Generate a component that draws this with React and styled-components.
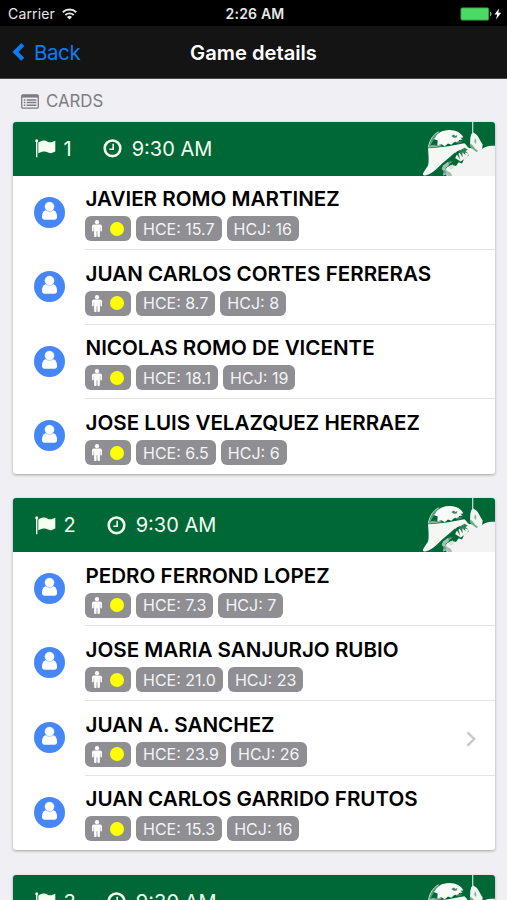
import React from 'react';
import styled, { createGlobalStyle } from 'styled-components';

const GlobalStyle = createGlobalStyle`
  * {
    box-sizing: border-box;
  }
  body {
    margin: 0;
    background: #efeff4;
    font-family: Inter, 'Liberation Sans', sans-serif;
  }
`;

const Screen = styled.div`
  width: 507px;
  height: 900px;
  overflow: hidden;
  background: #efeff4;
`;

const StatusBar = styled.div`
  display: grid;
  grid-template-columns: 1fr auto 1fr;
  align-items: center;
  height: 26px;
  padding: 1px 5px 0 8px;
  color: #e8e8e8;
  background: #000;
  font-size: 14px;
`;

const Carrier = styled.div`
  display: flex;
  align-items: center;
  gap: 7px;
  letter-spacing: 0.15px;
`;

const Clock = styled.div`
  font-size: 14px;
  font-weight: 600;
  letter-spacing: 0.2px;
`;

const Battery = styled.div`
  display: flex;
  justify-content: flex-end;
`;

const NavBar = styled.div`
  display: grid;
  grid-template-columns: 1fr auto 1fr;
  align-items: center;
  height: 53px;
  padding: 0 12px;
  background: #141414;
  border-bottom: 1px solid #4b4b4b;
`;

const BackButton = styled.button`
  display: flex;
  align-items: center;
  gap: 9px;
  padding: 0;
  border: none;
  background: none;
  color: #0a7cf6;
  font-family: inherit;
  font-size: 20.5px;
  letter-spacing: -0.4px;
`;

const PageTitle = styled.div`
  color: #fff;
  font-size: 20.2px;
  font-weight: 600;
`;

const SectionTitle = styled.div`
  display: flex;
  align-items: center;
  gap: 7px;
  height: 43px;
  padding: 1px 0 0 21px;
  color: #7d7d82;
  font-size: 16.8px;
`;

const Card = styled.div`
  margin: 0 12px 24.5px 13px;
  overflow: hidden;
  background: #fff;
  border-radius: 3px;
  box-shadow: 0 1px 3px rgba(0, 0, 0, 0.32);
`;

const CardHeader = styled.div`
  display: flex;
  align-items: center;
  height: 53.5px;
  padding-left: 22px;
  color: #f4fff2;
  background: #006837;
  font-size: 20px;
`;

const Hole = styled.div`
  display: flex;
  align-items: center;
  gap: 7.5px;
  margin-right: 31px;
`;

const TeeTime = styled.div`
  display: flex;
  align-items: center;
  gap: 10px;
`;

const GolferSvg = styled.svg`
  margin-left: auto;
`;

const Row = styled.div`
  display: flex;
  height: 74.6px;
  padding-left: 21px;
`;

const Avatar = styled.div`
  width: 31px;
  height: 31px;
  margin: 21px 20px 0 0;
  border-radius: 50%;
  background: #4687f7;
`;

const RowBody = styled.div`
  flex: 1;
  display: flex;
  align-items: center;
  justify-content: space-between;
  padding: 3px 18px 0 0;
  border-bottom: 1px solid ${({ $last }) => ($last ? 'transparent' : '#e4e4e6')};
`;

const PlayerName = styled.div`
  height: 26px;
  padding-left: 0.5px;
  line-height: 26px;
  color: #000;
  font-size: 20.6px;
  font-weight: 600;
  white-space: nowrap;
`;

const Badges = styled.div`
  display: flex;
  gap: 5px;
  margin-top: 4px;
`;

const Badge = styled.div`
  display: flex;
  align-items: center;
  height: 25px;
  padding: 0 7px;
  border-radius: 6px;
  color: #f4f4f6;
  background: #8e8e93;
  font-size: 16px;
  white-space: nowrap;
`;

const TeeDot = styled.span`
  width: 14px;
  height: 14px;
  margin-left: 8px;
  border-radius: 50%;
  background: #ffff00;
`;

const WifiIcon = () => (
  <svg width="15" height="12" viewBox="0 0 15 12" fill="none" stroke="#e8e8e8">
    <path d="M0.8 4.2a9.6 9.6 0 0 1 13.4 0" strokeWidth="1.9" />
    <path d="M3.3 7a6 6 0 0 1 8.4 0" strokeWidth="1.8" />
    <path d="M5 9a3.6 3.6 0 0 1 5 0L7.5 11.6z" fill="#e8e8e8" stroke="none" />
  </svg>
);

const BatteryIcon = () => (
  <svg width="42" height="14" viewBox="0 0 42 14">
    <rect x="0.8" y="0.8" width="28" height="12.4" rx="1.5" fill="#4cd964" stroke="#2d7d3b" strokeWidth="0.7" />
    <path d="M30 4.7c2 .3 2 4.3 0 4.6z" fill="#9a9a9a" />
    <path d="M39 1.5L34.5 7.6h2.7L36 12.6l5.2-6.8h-2.9z" fill="#fff" />
  </svg>
);

const BackIcon = () => (
  <svg width="13" height="19" viewBox="0 0 13 19" fill="none" stroke="currentColor" strokeWidth="4.2">
    <path d="M10.8 1.5L3.4 8.9l7.4 7.4" />
  </svg>
);

const ListIcon = () => (
  <svg width="18" height="15" viewBox="0 0 18 15" fill="none" stroke="#7d7d82">
    <rect x="0.7" y="0.8" width="16.6" height="13.4" rx="1.3" strokeWidth="1.3" />
    <path d="M1 2.2h16" strokeWidth="2.8" />
    <path d="M2.8 6h1.6M5.7 6h9.7M2.8 8.6h1.6M5.7 8.6h9.7M2.8 11.2h1.6M5.7 11.2h9.7" strokeWidth="1.5" />
  </svg>
);

const FlagIcon = () => (
  <svg width="21" height="19" viewBox="0 0 21 19" fill="currentColor">
    <circle cx="1.7" cy="1.7" r="1.5" />
    <path d="M1 2h1.4v16.3H1z" />
    <path d="M3.3 3.6C8 .9 10 1.1 13 2.9c2.5 1.2 5-.3 7.3-1.1v10.8c-2.3 1.2-4.7 2.3-7.2.9C10.2 11.8 7.6 12 3.3 14.3z" />
  </svg>
);

const ClockIcon = () => (
  <svg width="19" height="19" viewBox="0 0 19 19" fill="none" stroke="currentColor">
    <circle cx="9.5" cy="9.3" r="7.8" strokeWidth="2.6" />
    <path d="M10.2 4.7v5.6H6.4" strokeWidth="1.6" />
  </svg>
);

const PersonIcon = () => (
  <svg width="31" height="31" viewBox="0 0 31 31" fill="#fff">
    <path d="M11.3 13.2C9 14.2 8 16.5 8 19.9c0 1.7 1 2.8 2.6 2.8h9.8c1.6 0 2.6-1.1 2.6-2.8 0-3.4-1-5.7-3.3-6.7z" />
    <circle cx="15.5" cy="9.6" r="4.9" stroke="#4687f7" strokeWidth="0.4" />
  </svg>
);

const MaleIcon = () => (
  <svg width="10" height="17" viewBox="0 0 10 17" fill="#fff">
    <circle cx="5" cy="2.2" r="2.1" />
    <path d="M2 4.5h6c1.2 0 2 .8 2 2v4.1c0 1.3-1.7 1.3-1.7 0V7.2h-.4v8.7c0 1.4-2.5 1.4-2.5 0v-4.7h-.8v4.7c0 1.4-2.5 1.4-2.5 0V7.2h-.4v3.4c0 1.3-1.7 1.3-1.7 0V6.5c0-1.2.8-2 2-2z" />
  </svg>
);

const ChevronIcon = () => (
  <svg width="11" height="16" viewBox="0 0 11 16" fill="none" stroke="#c7c7cc" strokeWidth="2.4">
    <path d="M1.5 1.3L8.2 8l-6.7 6.7" />
  </svg>
);

const Golfer = () => (
  <GolferSvg width="76" height="54" viewBox="27 20 228 161" preserveAspectRatio="none">
    {/* body and arm */}
    <path
      fill="#f3f3f3"
      d="M255 91c-18-2-30 2-40 10l-18 2-17-6-10 10 6 12-14 12-6 13-10-4-8 11-12-3-14 6-10 12 10 18H255z"
    />
    {/* cap */}
    <path fill="#5c9a78" d="M55 96c4-24 16-40 32-47l-8 20-4 22z" />
    <path fill="none" stroke="#d5e8dc" strokeWidth="2.5" d="M55 95c4-22 15-38 31-46" />
    <path fill="#006837" d="M66 82l10-18 6 10-4 12-16 4z" />
    <path
      fill="#f7faf7"
      d="M76 66c5-11 19-22 42-22 21 0 36 9 42 22l-9 1 7 5-11 2-2 9-9-4-6 3-6 6-10-4-10 8-10-6-12 4 1-15-12-4z"
    />
    <path fill="#8cb8a0" d="M56 92l12-3 6 2 16-3 6 4-41 5z" />
    <path fill="#3c8560" d="M124 62l8-5 4 5 6-3-2 7-9 1zM139 80l14-5 4 5-12 5z" />
    {/* visor */}
    <path
      fill="#f5f7f5"
      d="M54 98l29-2 32-4 48-9 8 8-30 15-19 16-28 24c-12 12-20 21-34 28-10 5-22 8-21 2 0-5 8-14 15-26 3-8 2-30 0-52z"
    />
    {/* hand and club */}
    <path fill="#b9d8c6" d="M186 20h4v38h-4z" />
    <path fill="#f1f5f1" d="M184 56l6-5c7 4 12 8 15 14 5 8 7 15 13 22l-2 15-14 5-15-12-7-8 1-20z" />
    <path fill="#79ab8f" d="M180 84l8 5 7 10 9 7-4 4-13-10-8-9zM195 68l4 9-2 9-4-8z" />
    {/* fingers and face shadow */}
    <path fill="#f3f3f3" d="M136 106l32-16 12 10-8 24-20 14-16-10z" />
    <path
      fill="#2e8055"
      d="M164 97l9 5-6 5 8 7-10-3 2 8-10-9 1 16-9-14-3 2 5 19-10-15-7 9-6-2 13-18 12-4z"
    />
    <path fill="#006837" d="M142 108l9-3-3 7-9 6-4 9-8 6-20 10 18-21z" />
    <path fill="#a3c3b0" d="M99 150l14-11 8 2-7 11-8 5 5 8 12 7 4 10h-11l-8-6-9 4 2-14-6-6z" />
    <path fill="#5f987a" d="M113 139l10-3 3 4-9 6zM101 163l5 2 3 8-8-2z" />
    <path fill="#d5e1da" d="M119 150l9-3 5 7-8 7-8-3z" />
  </GolferSvg>
);

const games = [
  {
    hole: 1,
    time: '9:30 AM',
    players: [
      { name: 'JAVIER ROMO MARTINEZ', hce: '15.7', hcj: 16 },
      { name: 'JUAN CARLOS CORTES FERRERAS', hce: '8.7', hcj: 8 },
      { name: 'NICOLAS ROMO DE VICENTE', hce: '18.1', hcj: 19 },
      { name: 'JOSE LUIS VELAZQUEZ HERRAEZ', hce: '6.5', hcj: 6 },
    ],
  },
  {
    hole: 2,
    time: '9:30 AM',
    players: [
      { name: 'PEDRO FERROND LOPEZ', hce: '7.3', hcj: 7 },
      { name: 'JOSE MARIA SANJURJO RUBIO', hce: '21.0', hcj: 23 },
      { name: 'JUAN A. SANCHEZ', hce: '23.9', hcj: 26, link: true },
      { name: 'JUAN CARLOS GARRIDO FRUTOS', hce: '15.3', hcj: 16 },
    ],
  },
  { hole: 3, time: '9:30 AM', players: [] },
];

function Player({ player, last }) {
  return (
    <Row>
      <Avatar>
        <PersonIcon />
      </Avatar>
      <RowBody $last={last}>
        <div>
          <PlayerName>{player.name}</PlayerName>
          <Badges>
            <Badge>
              <MaleIcon />
              <TeeDot />
            </Badge>
            <Badge>HCE: {player.hce}</Badge>
            <Badge>HCJ: {player.hcj}</Badge>
          </Badges>
        </div>
        {player.link && <ChevronIcon />}
      </RowBody>
    </Row>
  );
}

function GameCard({ game }) {
  const { hole, time, players } = game;

  return (
    <Card>
      <CardHeader>
        <Hole>
          <FlagIcon />
          {hole}
        </Hole>
        <TeeTime>
          <ClockIcon />
          {time}
        </TeeTime>
        <Golfer />
      </CardHeader>
      {players.map((player, i) => (
        <Player key={player.name} player={player} last={i === players.length - 1} />
      ))}
    </Card>
  );
}

function App() {
  return (
    <Screen>
      <GlobalStyle />
      <StatusBar>
        <Carrier>
          Carrier
          <WifiIcon />
        </Carrier>
        <Clock>2:26 AM</Clock>
        <Battery>
          <BatteryIcon />
        </Battery>
      </StatusBar>
      <NavBar>
        <BackButton>
          <BackIcon />
          Back
        </BackButton>
        <PageTitle>Game details</PageTitle>
      </NavBar>
      <SectionTitle>
        <ListIcon />
        CARDS
      </SectionTitle>
      {games.map((game) => (
        <GameCard key={game.hole} game={game} />
      ))}
    </Screen>
  );
}

export default App;
